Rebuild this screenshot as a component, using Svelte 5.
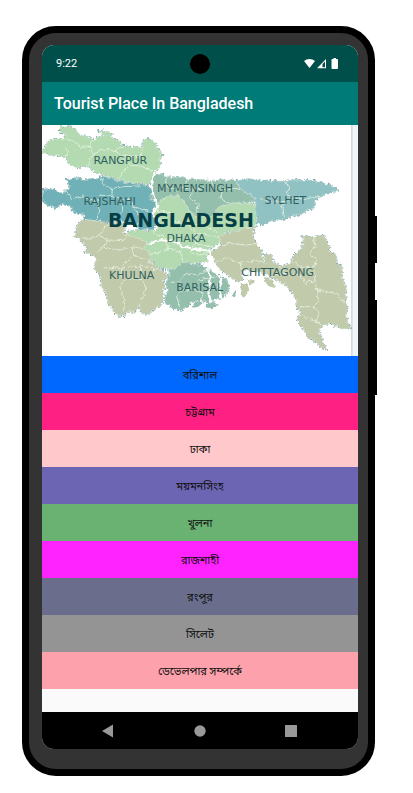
<script>
  const places = [
    { name: 'বরিশাল', tone: 'blue' },
    { name: 'চট্টগ্রাম', tone: 'rose' },
    { name: 'ঢাকা', tone: 'blush' },
    { name: 'ময়মনসিংহ', tone: 'violet' },
    { name: 'খুলনা', tone: 'green' },
    { name: 'রাজশাহী', tone: 'magenta' },
    { name: 'রংপুর', tone: 'slate' },
    { name: 'সিলেট', tone: 'grey' },
    { name: 'ডেভেলপার সম্পর্কে', tone: 'salmon' }
  ];

  // Division outlines, in the coordinates of the map's viewBox
  const divisions = [
    { fill: '#b3dab0', d: 'M6 95L18 78L25 65L45 57L68 58L78 45L56 30L60 20L90 20L108 30L115 42L150 52L165 65L172 50L198 46L170 34L190 31L215 42L210 52L235 62L250 75L275 82L305 80L310 60L325 55L345 65L352 85L365 100L362 120L355 145L345 158L340 175L325 193L300 190L265 188L230 178L195 165L165 155L150 145L152 135L130 140L105 142L85 130L75 112L50 105L30 108Z' },
    { fill: '#70b0b7', d: 'M80 180L105 175L140 178L172 178L180 168L205 172L240 185L275 190L320 197L335 205L340 222L328 235L345 250L348 262L335 275L340 285L352 295L345 308L355 320L340 335L320 325L300 330L285 315L260 310L240 300L205 305L165 302L130 298L132 285L100 275L92 258L70 252L48 265L28 258L10 245L6 215L20 205L45 210L60 220L78 210L88 200Z' },
    { fill: '#94bfad', d: 'M345 165L365 162L385 172L420 172L450 178L495 182L540 180L590 182L598 200L615 215L640 225L645 245L620 248L560 250L535 262L525 275L545 285L510 290L460 285L440 265L430 245L415 228L390 228L365 238L350 245L332 235L340 215L332 190Z' },
    { fill: '#91c2c3', d: 'M590 180L620 178L650 180L680 182L720 184L760 180L810 180L850 188L880 200L895 212L870 218L840 228L825 245L820 265L800 270L780 285L745 292L735 300L715 298L690 305L670 315L650 310L655 290L640 275L648 255L645 230L620 220L600 205Z' },
    { fill: '#b3dab0', d: 'M390 228L415 228L432 245L445 270L460 285L510 290L545 283L525 272L540 258L580 250L640 250L645 270L650 300L645 318L600 330L565 335L545 345L540 365L520 380L510 395L495 405L505 425L470 430L430 428L405 445L385 448L355 445L340 425L330 400L310 385L325 370L280 355L255 345L265 335L310 330L345 335L358 318L350 300L340 280L350 262L352 245L370 235Z' },
    { fill: '#c1cbab', d: 'M130 298L165 302L205 310L240 305L255 320L250 340L275 350L310 362L322 372L310 385L328 400L340 430L355 448L375 455L382 470L370 480L378 495L368 510L372 530L362 560L345 565L325 580L305 582L298 560L285 575L262 575L245 590L230 585L215 565L205 545L195 515L185 500L180 465L165 450L165 435L172 418L160 405L130 395L145 385L120 360L103 350L108 330L118 310Z' },
    { fill: '#94bfad', d: 'M385 448L410 445L425 428L445 432L480 435L500 445L530 460L545 470L560 480L570 505L560 520L545 535L520 540L505 548L480 540L455 545L440 560L425 572L400 568L378 550L375 530L385 510L378 490L388 470Z' },
    { fill: '#c1cbab', d: 'M560 340L600 330L645 318L640 345L645 365L662 390L670 425L680 435L672 405L695 402L700 430L730 437L755 430L760 405L785 388L790 365L785 350L800 345L820 352L840 345L855 350L865 375L868 395L885 400L892 425L905 440L905 475L920 500L915 540L922 560L920 590L932 630L900 625L875 612L850 615L835 635L850 665L863 695L840 680L820 660L800 650L790 630L775 605L770 595L785 580L768 562L775 545L755 515L735 495L700 475L660 455L620 450L600 455L610 480L590 485L565 465L540 450L525 425L510 405L525 390L545 375L535 350Z' }
  ];

  const islands = [
    { fill: '#c1cbab', d: 'M601 491L622 492L628 510L620 525L603 535L608 512Z' },
    { fill: '#c1cbab', d: 'M671 472L690 473L703 492L705 504L690 500L673 485Z' },
    { fill: '#c1cbab', d: 'M622 477L642 479L644 490L630 493Z' },
    { fill: '#94bfad', d: 'M583 509L590 512L584 532L576 531Z' },
    { fill: '#94bfad', d: 'M500 553L520 547L534 554L514 565L496 562Z' },
    { fill: '#94bfad', d: 'M462 549L478 543L488 550L470 563L458 562Z' }
  ];

  const districts =
    'M78 58L105 65L125 82L150 80L158 60M150 80L158 103L145 137M158 103L190 88L225 92L250 76M225 92L245 108L300 110L308 82M245 108L270 135L250 155L232 178M270 135L310 140L345 155M75 112L85 95L78 82' +
    'M182 172L190 195L220 207L218 230L245 240L270 238L280 260L325 275M220 207L250 200L300 198M218 230L180 225L170 250L180 270L165 298M170 250L130 228L95 236L78 212M245 240L248 270L232 300M280 260L300 290L292 312' +
    'M382 174L378 200L400 205L415 228M518 182L520 200L545 208L540 235L570 249M430 200L448 175M400 205L430 200L455 210L490 202M455 210L450 235L475 250L470 280M545 208L600 205' +
    'M732 185L748 198L738 215L750 232L740 245L725 260L730 292M750 232L790 240L825 230L845 230M660 235L690 245L740 245' +
    'M345 270L390 278L402 306L440 312L470 340L465 370L500 378L520 380M340 338L370 350L385 385L350 400L330 402M385 385L420 393L430 425M465 370L450 398L475 405L500 400M440 312L490 315L530 335M470 340L535 350' +
    'M118 352L155 355L180 345L200 360L190 382L172 395M180 345L205 312M200 360L250 362L262 345M190 382L240 390L275 380L310 385M275 380L280 405L320 420L340 430M280 405L240 445L190 440M240 445L250 480L240 510L255 540L250 572M240 445L300 438L355 448M300 438L305 475L320 510L302 540L300 562M250 480L305 475' +
    'M390 488L420 482L440 460L475 465L500 450M420 482L430 510L410 530L420 565M430 510L465 508L490 522L480 540M465 508L475 480L530 470' +
    'M540 380L570 370L620 375L650 370M530 425L560 415L600 430L655 420L670 428M600 430L610 455M820 352L825 380L812 400L830 420L820 445L790 440L760 432M820 445L825 480L795 490L780 465L730 460L700 470M825 480L830 510L890 520L915 550M830 510L835 545L820 560L780 560M820 560L838 580L825 605L845 612M780 585L820 600M730 460L720 437';

  const rivers =
    'M345 152L335 195L342 230L352 260L340 282L356 305L345 332M325 372L360 360L400 365L430 380L470 388L510 392M510 392L505 430L530 460L545 478L535 500L545 535M510 405L525 440L555 470L588 490M610 455L640 462L680 468M500 445L512 475L505 520L515 545';

  const labels = [
    { text: 'RANGPUR', x: 241, y: 131 },
    { text: 'MYMENSINGH', x: 465, y: 216 },
    { text: 'RAJSHAHI', x: 209, y: 254 },
    { text: 'SYLHET', x: 736, y: 251 },
    { text: 'DHAKA', x: 438, y: 367 },
    { text: 'KHULNA', x: 275, y: 478 },
    { text: 'BARISAL', x: 479, y: 513 },
    { text: 'CHITTAGONG', x: 713, y: 469 }
  ];
</script>

<div class="stage">
  <div class="phone">
    <span class="key power"></span>
    <span class="key volume"></span>
    <div class="screen">
      <div class="status">
        <span class="clock">9:22</span>
        <span class="camera"></span>
        <svg class="signals" viewBox="0 0 34 12" aria-hidden="true">
          <path d="M0 3C3 .3 8 .3 11 3L5.500 10Z" fill="#fff" />
          <path d="M13 10.300L22 1V10.300Z" fill="#fff" />
          <path d="M18.500 9.300V6L21 3.500V9.300Z" fill="#014f4b" />
          <path d="M28.500 1H29.500V0H32V1H33Q34 1 34 2V10Q34 11 33 11H28.500Q27.500 11 27.500 10V2Q27.500 1 28.500 1Z" fill="#fff" />
        </svg>
      </div>
      <header><h1>Tourist Place In Bangladesh</h1></header>
      <main>
        <svg class="map" viewBox="6 15 948 693" role="img" aria-label="Map of the divisions of Bangladesh">
          <defs>
            <filter id="coast" x="-5%" y="-5%" width="110%" height="110%">
              <feTurbulence type="fractalNoise" baseFrequency="0.08" numOctaves="2" seed="4" />
              <feDisplacementMap in="SourceGraphic" scale="16" xChannelSelector="R" yChannelSelector="G" />
            </filter>
          </defs>
          <rect x="6" y="15" width="948" height="693" fill="#fff" />
          <rect x="933" y="15" width="21" height="693" fill="#f0f5f7" />
          <rect x="933" y="15" width="5" height="693" fill="#d3dbdd" />
          <g filter="url(#coast)" stroke-linejoin="round">
            {#each divisions as area}
              <path d={area.d} fill={area.fill} stroke="#5f9293" stroke-width="5" stroke-dasharray="6 5" />
            {/each}
            {#each divisions as area}
              <path d={area.d} fill={area.fill} stroke="#fff" stroke-opacity=".55" stroke-width="2" />
            {/each}
            {#each islands as area}
              <path d={area.d} fill={area.fill} />
            {/each}
            <path d={districts} fill="none" stroke="#eef5e7" stroke-opacity=".75" stroke-width="3" />
            <path d={rivers} fill="none" stroke="#fff" stroke-width="6" />
          </g>
          {#each labels as label}
            <text class="division" x={label.x} y={label.y}>{label.text}</text>
          {/each}
          <text class="country" x="423" y="322">BANGLADESH</text>
        </svg>
        <nav class="places" aria-label="Places">
          {#each places as place}
            <button type="button" class={place.tone}>{place.name}</button>
          {/each}
        </nav>
      </main>
      <div class="system">
        <button type="button" aria-label="Back">
          <svg viewBox="0 0 14 14"><path d="M0 7L11 .500V13.500Z" /></svg>
        </button>
        <button type="button" aria-label="Home">
          <svg viewBox="0 0 14 14"><circle cx="7" cy="7" r="5.700" /></svg>
        </button>
        <button type="button" aria-label="Recent apps">
          <svg viewBox="0 0 14 14"><rect x="1" y="1" width="12" height="12" rx=".500" /></svg>
        </button>
      </div>
    </div>
  </div>
</div>

<style>
  :global(body) {
    margin: 0;
    background: #fff;
  }
  .stage {
    padding: 26px 38px 17px 22px;
    font-family: Roboto, 'Noto Sans Bengali', 'Noto Sans', sans-serif;
  }
  .phone {
    position: relative;
    padding: 12px 10px 20px 13px;
    border: 7px solid #000;
    border-radius: 34px;
    background: #333;
  }
  .key {
    position: absolute;
    right: -9px;
    width: 3px;
    background: #000;
  }
  .power {
    top: 183px;
    height: 47px;
  }
  .volume {
    top: 267px;
    height: 95px;
  }
  .screen {
    overflow: hidden;
    border-radius: 12px;
    background: #fafafa;
  }
  .status {
    display: grid;
    grid-template-columns: 1fr auto 1fr;
    align-items: center;
    height: 37px;
    padding: 0 20px 0 14px;
    background: #014f4b;
    color: #fff;
  }
  .clock {
    font-size: 11px;
  }
  .camera {
    width: 20px;
    height: 20px;
    margin-left: 6px;
    border-radius: 50%;
    background: #000;
  }
  .signals {
    justify-self: end;
    width: 34px;
    height: 12px;
  }
  header {
    display: flex;
    align-items: center;
    height: 43px;
    padding: 0 12px;
    background: #017b78;
    color: #fff;
  }
  h1 {
    margin: 0;
    font-size: 16px;
    font-weight: 500;
  }
  main {
    padding-bottom: 23px;
  }
  .map {
    display: block;
    width: 100%;
    height: auto;
  }
  .division,
  .country {
    font-family: 'DejaVu Sans', sans-serif;
    text-anchor: middle;
  }
  .division {
    font-size: 33px;
    fill: #315f60;
  }
  .country {
    font-size: 57px;
    font-weight: 700;
    fill: #063e46;
  }
  .places {
    display: flex;
    flex-direction: column;
  }
  .places button {
    height: 37px;
    padding: 2px 0 0;
    border: 0;
    color: #111;
    font: inherit;
    font-size: 11px;
  }
  .blue { background: #0068ff; }
  .rose { background: #ff2083; }
  .blush { background: #ffc8cb; }
  .violet { background: #6c65b3; }
  .green { background: #69b271; }
  .magenta { background: #ff23ff; }
  .slate { background: #6a6e8c; }
  .grey { background: #949494; }
  .salmon { background: #fda2ac; }
  .system {
    display: flex;
    justify-content: space-between;
    align-items: center;
    height: 37px;
    padding: 0 19%;
    background: #000;
  }
  .system button {
    display: flex;
    padding: 0;
    border: 0;
    background: none;
  }
  .system svg {
    width: 14px;
    height: 14px;
    fill: #999;
  }
</style>
